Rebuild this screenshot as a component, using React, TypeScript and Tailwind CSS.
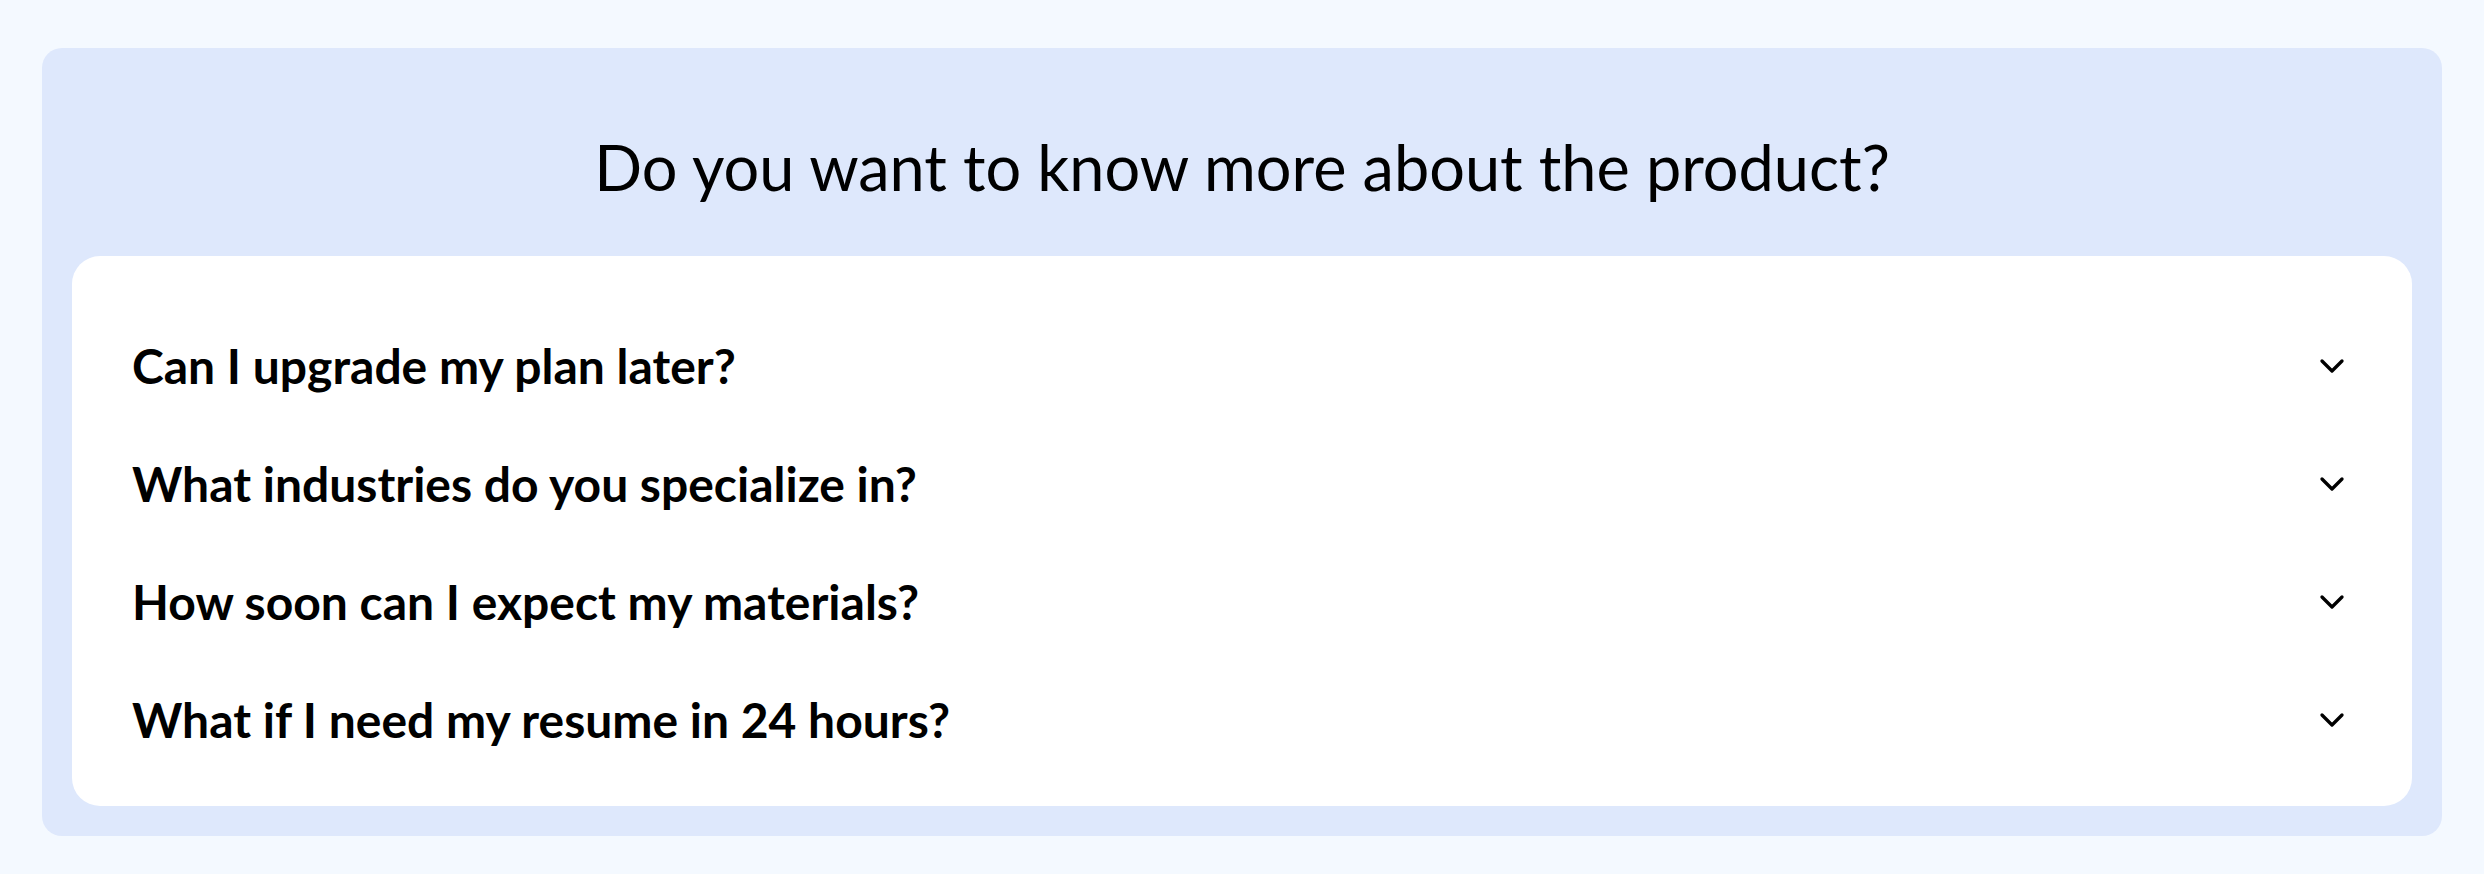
import { ChevronDown } from "lucide-react";

const questions = [
  "Can I upgrade my plan later?",
  "What industries do you specialize in?",
  "How soon can I expect my materials?",
  "What if I need my resume in 24 hours?",
];

export default function App() {
  return (
    <div className="min-h-screen bg-[#f4f9ff] px-[42px] pt-[48px] pb-[38px] font-['Lato',sans-serif] text-black">
      <div className="rounded-[20px] bg-[#dee8fc] px-[30px] pb-[30px]">
        <h2 className="pt-[81px] pb-[51px] text-center text-[63px] leading-[76px] font-normal">
          Do you want to know more about the product?
        </h2>
        <div className="rounded-[28px] bg-white pl-[60px] pr-[60px] pt-[51px] pb-[27px]">
          {questions.map((q) => (
            <div key={q} className="flex h-[118px] items-center justify-between">
              <span className="text-[48px] leading-none font-bold">{q}</span>
              <ChevronDown size={40} strokeWidth={2} />
            </div>
          ))}
        </div>
      </div>
    </div>
  );
}
